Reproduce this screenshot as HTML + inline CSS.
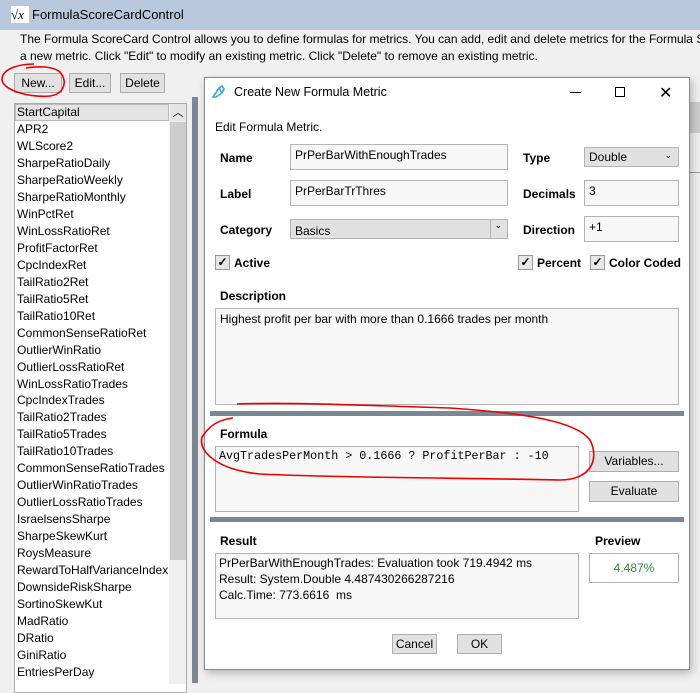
<!DOCTYPE html>
<html><head><style>
*{box-sizing:border-box;margin:0;padding:0}
body{width:700px;height:683px;overflow:hidden;background:#f0f0f0;font-family:"Liberation Sans",sans-serif;font-size:12px;color:#000;position:relative}
.a{position:absolute;white-space:nowrap}
.btn{position:absolute;background:#e1e1e1;border:1px solid #adadad;text-align:center;line-height:18px}
.inp{position:absolute;background:#f7f7f7;border:1px solid #b4b4b4;padding:3px 4px}
.b{font-weight:bold}
.cb{position:absolute;width:15px;height:15px;background:#e6e6e6;border:1px solid #999;font-size:12px;line-height:13px;text-align:center;font-weight:bold}
.li{position:absolute;left:17px;height:17px;line-height:17px}
</style></head><body>
<div class="a" style="left:0;top:0;width:700px;height:30px;background:#b9c9dd"></div>
<div class="a" style="left:11px;top:6px;width:18px;height:17px;background:#fff;font-size:13px;line-height:17px;font-family:'Liberation Serif',serif;font-style:italic">√x</div>
<div class="a" style="left:32px;top:7px;font-size:13px">FormulaScoreCardControl</div>
<div class="a" style="left:20px;top:31px;width:680px;overflow:hidden;line-height:17px">The Formula ScoreCard Control allows you to define formulas for metrics. You can add, edit and delete metrics for the Formula ScoreCard<br>a new metric. Click "Edit" to modify an existing metric. Click "Delete" to remove an existing metric.</div>
<div class="btn" style="left:14px;top:73px;width:48px;height:20px">New...</div>
<div class="btn" style="left:69px;top:73px;width:42px;height:20px">Edit...</div>
<div class="btn" style="left:120px;top:73px;width:45px;height:20px">Delete</div>
<div class="a" style="left:14px;top:103px;width:173px;height:590px;background:#fff;border:1px solid #aaa"></div>
<div class="a" style="left:15px;top:104px;width:154px;height:17px;background:#e5e5e5;border:1px solid #bbb"></div>
<div class="a" style="left:169px;top:104px;width:17px;height:580px;background:#f0f0f0"></div>
<div class="a" style="left:170px;top:104px;width:16px;height:17px;background:#e5e5e5;text-align:center;font-size:11px;line-height:18px">︿</div>
<div class="a" style="left:170px;top:122px;width:16px;height:438px;background:#cdcdcd"></div>
<div class="a" style="left:192px;top:97px;width:6px;height:586px;background:#7d8791"></div>
<div class="a" style="left:690px;top:102px;width:10px;height:31px;background:#cdcdcd"></div>
<div class="a" style="left:690px;top:172px;width:10px;height:1px;background:#999"></div>
<div id="list"></div>
<div class="a" style="left:204px;top:77px;width:486px;height:593px;background:#fff;border:1px solid #888;box-shadow:2px 3px 8px rgba(0,0,0,.25)"></div>
<svg class="a" style="left:210px;top:84px" width="18" height="16" viewBox="0 0 18 16"><path d="M3 13 L9 4 L12 9 L6 13Z M9 4 L12 2 L14 5 L12 9" fill="none" stroke="#3ba4e0" stroke-width="1.6"/></svg>
<div class="a" style="left:234px;top:85px;font-size:12.5px">Create New Formula Metric</div>
<div class="a" style="left:570px;top:92px;width:11px;height:1px;background:#000"></div>
<div class="a" style="left:615px;top:87px;width:10px;height:10px;border:1px solid #000"></div>
<div class="a" style="left:659px;top:83px;font-size:16px">✕</div>
<div class="a" style="left:215px;top:120px">Edit Formula Metric.</div>
<div class="a b" style="left:220px;top:151px">Name</div>
<div class="inp" style="left:290px;top:144px;width:218px;height:26px">PrPerBarWithEnoughTrades</div>
<div class="a b" style="left:523px;top:151px">Type</div>
<div class="inp" style="left:584px;top:147px;width:95px;height:20px;background:#e1e1e1;padding:2px 4px">Double<span style="position:absolute;right:6px;font-size:9px">⌄</span></div>
<div class="a b" style="left:220px;top:187px">Label</div>
<div class="inp" style="left:290px;top:180px;width:218px;height:26px">PrPerBarTrThres</div>
<div class="a b" style="left:523px;top:187px">Decimals</div>
<div class="inp" style="left:584px;top:180px;width:95px;height:26px">3</div>
<div class="a b" style="left:220px;top:223px">Category</div>
<div class="inp" style="left:290px;top:219px;width:218px;height:20px;background:#e1e1e1;padding:4px 4px 0">Basics<span style="position:absolute;left:199px;top:0;width:1px;height:18px;background:#b4b4b4"></span><span style="position:absolute;right:5px;top:0;font-size:9px">⌄</span></div>
<div class="a b" style="left:523px;top:223px">Direction</div>
<div class="inp" style="left:584px;top:216px;width:95px;height:26px">+1</div>
<div class="cb" style="left:215px;top:255px">✓</div><div class="a b" style="left:234px;top:256px">Active</div>
<div class="cb" style="left:518px;top:255px">✓</div><div class="a b" style="left:537px;top:256px">Percent</div>
<div class="cb" style="left:590px;top:255px">✓</div><div class="a b" style="left:609px;top:256px">Color Coded</div>
<div class="a b" style="left:220px;top:289px">Description</div>
<div class="inp" style="left:215px;top:308px;width:464px;height:97px">Highest profit per bar with more than 0.1666 trades per month</div>
<div class="a" style="left:210px;top:411px;width:474px;height:5px;background:#7a8896"></div>
<div class="a b" style="left:220px;top:427px">Formula</div>
<div class="inp" style="left:215px;top:446px;width:364px;height:66px;font-family:'Liberation Mono',monospace;font-size:11.7px;padding:2px 3px">AvgTradesPerMonth &gt; 0.1666 ? ProfitPerBar : -10</div>
<div class="btn" style="left:589px;top:451px;width:90px;height:21px">Variables...</div>
<div class="btn" style="left:589px;top:481px;width:90px;height:21px">Evaluate</div>
<div class="a" style="left:210px;top:517px;width:474px;height:5px;background:#7a8896"></div>
<div class="a b" style="left:220px;top:534px">Result</div>
<div class="a b" style="left:595px;top:534px">Preview</div>
<div class="inp" style="left:215px;top:553px;width:364px;height:66px;line-height:16px;padding:1px 3px">PrPerBarWithEnoughTrades: Evaluation took 719.4942 ms<br>Result: System.Double 4.487430266287216<br>Calc.Time: 773.6616&nbsp; ms</div>
<div class="a" style="left:589px;top:553px;width:90px;height:30px;border:1px solid #b4b4b4;background:#fff;color:#2e8b2e;text-align:center;line-height:28px">4.487%</div>
<div class="btn" style="left:392px;top:634px;width:45px;height:20px">Cancel</div>
<div class="btn" style="left:457px;top:634px;width:45px;height:20px">OK</div>
<svg class="a" style="left:0;top:0" width="700" height="683"><g fill="none" stroke="#e00" stroke-width="1.6">
<path d="M34 64 C20 64 4 68 2 78 C0 90 30 98 50 96 C64 94 68 82 60 72 C52 66 40 66 26 68"/>
<path d="M233 418 C218 420 210 425 202 437 C198 452 218 470 260 474 C340 478 480 478 560 480 C590 480 600 460 590 440 C575 420 520 413 450 408 C380 406 300 402 237 404"/>
</g></svg>
<script>
var n="StartCapital APR2 WLScore2 SharpeRatioDaily SharpeRatioWeekly SharpeRatioMonthly WinPctRet WinLossRatioRet ProfitFactorRet CpcIndexRet TailRatio2Ret TailRatio5Ret TailRatio10Ret CommonSenseRatioRet OutlierWinRatio OutlierLossRatioRet WinLossRatioTrades CpcIndexTrades TailRatio2Trades TailRatio5Trades TailRatio10Trades CommonSenseRatioTrades OutlierWinRatioTrades OutlierLossRatioTrades IsraelsensSharpe SharpeSkewKurt RoysMeasure RewardToHalfVarianceIndex DownsideRiskSharpe SortinoSkewKut MadRatio DRatio GiniRatio EntriesPerDay".split(" "),h="";
n.forEach(function(s,i){h+='<div class="li" style="top:'+(104+i*16.97)+'px">'+s+'</div>'});
document.getElementById("list").innerHTML=h;
</script>
</body></html>
